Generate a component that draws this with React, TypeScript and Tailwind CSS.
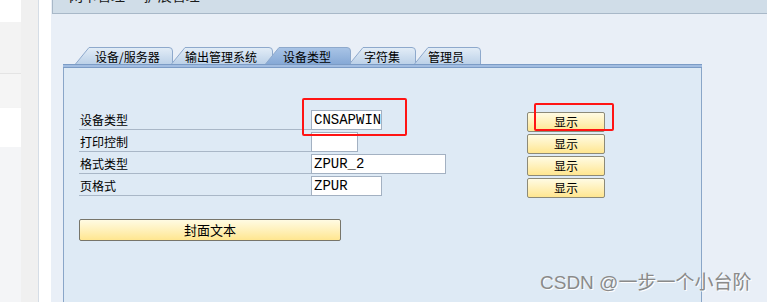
import * as React from "react";

const cjk = { fontFamily: '"Noto Sans CJK SC", "Noto Sans", sans-serif' };
const mono = { fontFamily: '"Liberation Mono", "DejaVu Sans Mono", monospace' };

interface TabProps {
  label: string;
  width: number;
  pad: number;
  active?: boolean;
  first?: boolean;
}

function Tab({ label, width, pad, active, first }: TabProps) {
  const h = 17;
  const s = 14;
  const id = active ? "tabActive" : "tabIdle";
  return (
    <div
      className={`relative h-[17px] shrink-0 ${first ? "" : "-ml-[2px]"} ${active ? "z-10 -ml-[8px]" : ""}`}
      style={{ width }}
    >
      <svg className="absolute inset-0" width={width} height={h} viewBox={`0 0 ${width} ${h}`}>
        <defs>
          <linearGradient id={id} x1="0" y1="0" x2="0" y2="1">
            {active ? (
              <>
                <stop offset="0" stopColor="#a9c4e6" />
                <stop offset="1" stopColor="#86a9d6" />
              </>
            ) : (
              <>
                <stop offset="0" stopColor="#e3edf7" />
                <stop offset="1" stopColor="#bcd1e8" />
              </>
            )}
          </linearGradient>
        </defs>
        <path
          d={`M0.5 ${h} L${s} 0.5 L${width - 4} 0.5 Q${width - 0.5} 0.5 ${width - 0.5} 4 L${width - 0.5} ${h}`}
          fill={`url(#${id})`}
          stroke="#8ea9cc"
          strokeWidth="1"
        />
      </svg>
      <span
        className="relative block text-[12px] leading-[17px] pt-[1px] text-black whitespace-nowrap"
        style={{ ...cjk, paddingLeft: pad }}
      >
        {label}
      </span>
    </div>
  );
}

interface RowProps {
  label: string;
  value: string;
  inputWidth: number;
}

function FieldRow({ label, value, inputWidth }: RowProps) {
  return (
    <div className="flex h-[22px]">
      <div className="w-[232px] h-[22px] border-b border-[#a9b7c7] flex items-end">
        <span className="text-[12px] leading-[15px] pl-[1px] pb-[2px] text-black" style={cjk}>
          {label}
        </span>
      </div>
      <div className="w-[216px] pt-[2px]">
        <div
          className="h-[20px] bg-white border border-[#a3b1c2] text-[14px] leading-[18px] pl-[2px] text-black"
          style={{ ...mono, width: inputWidth }}
        >
          {value}
        </div>
      </div>
      <div className="pt-[1px]">
        <button
          type="button"
          className="w-[78px] h-[20px] rounded-[2px] border border-[#8c8a78] bg-gradient-to-b from-[#fffbe3] to-[#ffe68f] text-[12px] leading-[18px] text-black"
          style={cjk}
        >
          显示
        </button>
      </div>
    </div>
  );
}

export default function App() {
  return (
    <div className="relative w-[767px] h-[302px] overflow-hidden flex bg-white">
      {/* left edge of the host window */}
      <div className="w-[21px] flex flex-col">
        <div className="h-[22px] bg-white" />
        <div className="h-[52px] bg-[#f3f3f3] border-b border-[#e4e4e4]" />
        <div className="h-[34px] bg-[#f5f5f5]" />
        <div className="h-[39px] bg-white shadow-[0_1px_2px_rgba(0,0,0,0.08)]" />
        <div className="flex-1 bg-[#f4f5f7]" />
      </div>
      <div className="w-[17px] bg-[#f0f0f0]" />
      <div className="w-px bg-[#d5dde6]" />
      <div className="w-[12px] bg-white" />

      {/* SAP area */}
      <div className="flex-1 flex flex-col bg-[#e9eff7]">
        <div className="ml-px h-[14px] bg-[#d0dde8] border-b border-l border-[#a8b8c8] overflow-hidden">
          <div className="pl-[16px] -mt-[13px] text-[14px] leading-[16px] text-[#1a1a1a] whitespace-nowrap" style={cjk}>
            网卡管理 — 扩展管理
          </div>
        </div>

        <div className="ml-[24px] mt-[33px] flex items-end h-[17px]">
          <Tab label="设备/服务器" width={98} pad={20} first />
          <Tab label="输出管理系统" width={102} pad={14} />
          <Tab label="设备类型" width={86} pad={18} active />
          <Tab label="字符集" width={67} pad={15} />
          <Tab label="管理员" width={67} pad={14} />
        </div>

        <div className="ml-[12px] w-[639px] flex-1 flex flex-col">
          <div className="h-[4px] bg-[#a2bde1] border-y border-[#7c9cc6]" />
          <div className="flex-1 bg-[#deeaf5] border-l border-r border-[#8aa6c8] pl-[15px] pt-[40px]">
            <FieldRow label="设备类型" value="CNSAPWIN" inputWidth={71} />
            <FieldRow label="打印控制" value="" inputWidth={47} />
            <FieldRow label="格式类型" value="ZPUR_2" inputWidth={135} />
            <FieldRow label="页格式" value="ZPUR" inputWidth={71} />
            <button
              type="button"
              className="mt-[23px] w-[262px] h-[22px] rounded-[2px] border border-[#77756a] bg-gradient-to-b from-[#fffbe3] to-[#ffe68f] text-[13px] leading-[20px] text-black"
              style={cjk}
            >
              封面文本
            </button>
          </div>
        </div>
      </div>

      {/* annotation boxes */}
      <div className="absolute left-[302px] top-[98px] w-[105px] h-[38px] border-[2.5px] border-[#ff1414] rounded-[2px]" />
      <div className="absolute left-[534px] top-[103px] w-[80px] h-[28px] border-[2.5px] border-[#ff1414] rounded-[2px]" />

      {/* watermark */}
      <div
        className="absolute left-[540px] top-[271px] text-[19px] leading-[24px] text-[#8a8a8a] whitespace-nowrap [text-shadow:1px_1px_0_#ffffff]"
        style={{ fontFamily: '"Liberation Sans", "Noto Sans CJK SC", sans-serif' }}
      >
        CSDN @一步一个小台阶
      </div>
    </div>
  );
}
